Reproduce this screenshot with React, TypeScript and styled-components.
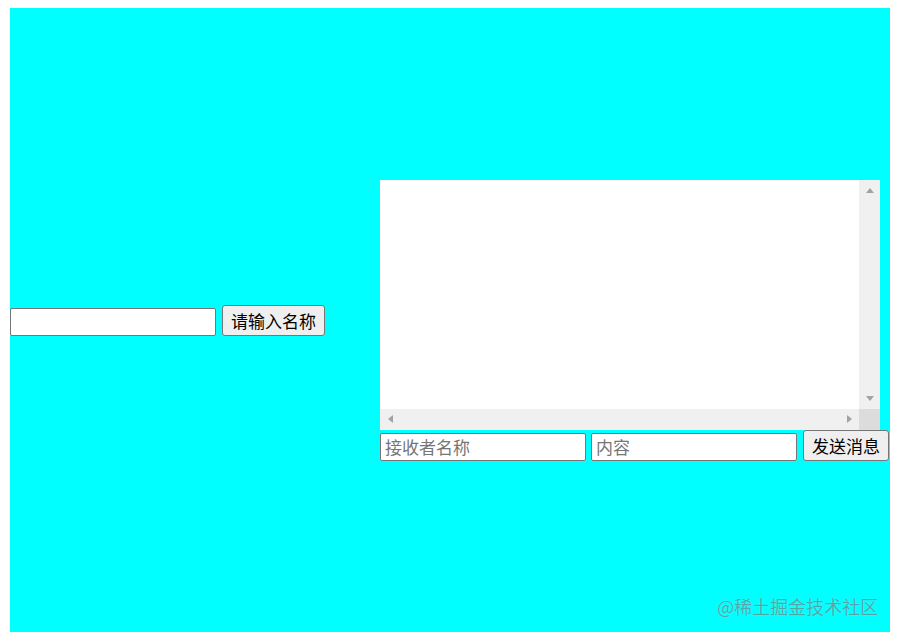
import React from 'react';
import styled, { createGlobalStyle } from 'styled-components';

const GlobalStyle = createGlobalStyle`
  body {
    margin: 8px 8px 0 10px;
    font-family: 'Noto Sans CJK SC', 'Noto Sans', sans-serif;
  }
`;

const Page = styled.div`
  position: relative;
  width: 880px;
  height: 624px;
  background-color: #00ffff;
  display: flex;
  align-items: center;
`;

const LeftColumn = styled.div`
  width: 370px;
  display: flex;
  align-items: flex-end;
  gap: 6px;
`;

const RightColumn = styled.div`
  display: flex;
  flex-direction: column;
  width: 500px;
`;

const TextInput = styled.input`
  box-sizing: border-box;
  width: 206px;
  height: 28px;
  margin: 0;
  padding: 0 4px;
  border: 1px solid #767676;
  border-radius: 2px;
  background: white;
  font-family: inherit;
  font-size: 17px;
  color: #000;
  &::placeholder {
    color: #757575;
  }
`;

const Button = styled.button`
  box-sizing: border-box;
  height: 31px;
  margin: 0;
  padding: 0 8px;
  border: 1px solid #767676;
  border-radius: 3px;
  background: #efefef;
  font-family: inherit;
  font-size: 17px;
  color: #000;
  white-space: nowrap;
`;

const Frame = styled.div`
  display: grid;
  grid-template-columns: 479px 21px;
  grid-template-rows: 229px 21px;
  width: 500px;
  height: 250px;
  background: white;
`;

const MessageArea = styled.textarea`
  box-sizing: border-box;
  width: 100%;
  height: 100%;
  margin: 0;
  padding: 2px;
  border: none;
  outline: none;
  resize: none;
  overflow: hidden;
  font-family: inherit;
  font-size: 17px;
`;

const Track = styled.div<{ $vertical?: boolean }>`
  background: #f0f0f0;
  display: flex;
  flex-direction: ${(p) => (p.$vertical ? 'column' : 'row')};
  justify-content: space-between;
  align-items: center;
  padding: ${(p) => (p.$vertical ? '8px 0' : '0 7px 0 8px')};
  box-sizing: border-box;
`;

const Corner = styled.div`
  background: #dcdcdc;
`;

const Arrow = styled.span<{ $dir: 'up' | 'down' | 'left' | 'right' }>`
  width: 0;
  height: 0;
  border-style: solid;
  border-color: transparent;
  ${(p) =>
    p.$dir === 'up'
      ? 'border-width: 0 4.5px 5px 4.5px; border-bottom-color: #a3a3a3;'
      : p.$dir === 'down'
        ? 'border-width: 5px 4.5px 0 4.5px; border-top-color: #a3a3a3;'
        : p.$dir === 'left'
          ? 'border-width: 4.5px 5px 4.5px 0; border-right-color: #a3a3a3;'
          : 'border-width: 4.5px 0 4.5px 5px; border-left-color: #a3a3a3;'}
`;

const SendRow = styled.div`
  display: flex;
  align-items: flex-end;
  width: max-content;
  height: 31px;
`;

const RecipientInput = styled(TextInput)`
  margin-right: 5px;
`;

const ContentInput = styled(TextInput)`
  margin-right: 6px;
`;

const Watermark = styled.div`
  position: absolute;
  right: 12px;
  bottom: 13px;
  font-size: 18px;
  color: rgba(50, 80, 80, 0.5);
  text-shadow: 0 0 1px rgba(255, 255, 255, 0.5);
  white-space: nowrap;
`;

const App: React.FC = () => {
  return (
    <>
      <GlobalStyle />
      <Page>
        <LeftColumn>
          <TextInput type='text' />
          <Button>请输入名称</Button>
        </LeftColumn>
        <RightColumn>
          <Frame>
            <MessageArea readOnly wrap='off' />
            <Track $vertical>
              <Arrow $dir='up' />
              <Arrow $dir='down' />
            </Track>
            <Track>
              <Arrow $dir='left' />
              <Arrow $dir='right' />
            </Track>
            <Corner />
          </Frame>
          <SendRow>
            <RecipientInput type='text' placeholder='接收者名称' />
            <ContentInput type='text' placeholder='内容' />
            <Button>发送消息</Button>
          </SendRow>
        </RightColumn>
        <Watermark>@稀土掘金技术社区</Watermark>
      </Page>
    </>
  );
};

export default App;
